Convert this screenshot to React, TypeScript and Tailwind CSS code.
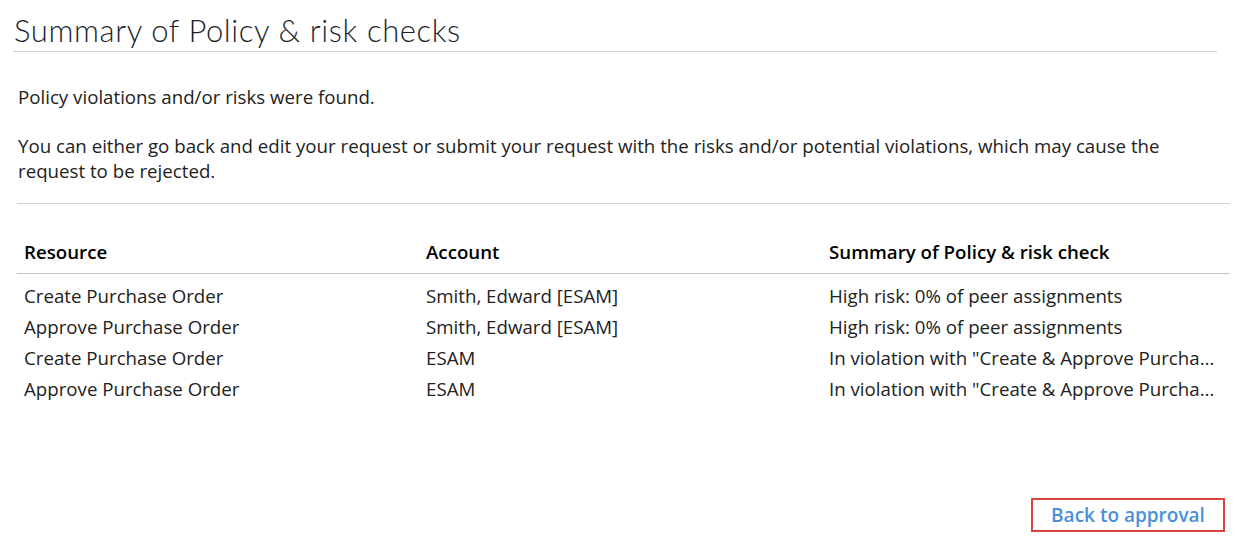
import React from "react";

const rows = [
  ["Create Purchase Order", "Smith, Edward [ESAM]", "High risk: 0% of peer assignments"],
  ["Approve Purchase Order", "Smith, Edward [ESAM]", "High risk: 0% of peer assignments"],
  ["Create Purchase Order", "ESAM", 'In violation with "Create & Approve Purchase Orders" policy'],
  ["Approve Purchase Order", "ESAM", 'In violation with "Create & Approve Purchase Orders" policy'],
];

export default function App() {
  return (
    <div className="w-[1243px] h-[540px] bg-white text-[#222] overflow-hidden" style={{ fontFamily: '"Open Sans", sans-serif' }}>
      <div className="pl-[13px] pr-[26px] pt-[11px]">
        <h1 className="text-[31px] leading-[38px] font-light tracking-[0.6px] text-[#1a1f2c] pl-px pb-[2px] border-b border-[#d4d4d4]" style={{ fontFamily: 'Lato, "Open Sans", sans-serif' }}>
          Summary of Policy &amp; risk checks
        </h1>
      </div>
      <div className="pl-[17px] pr-[13px]">
        <div className="pl-px pt-[32px] pb-[20px] text-[18.7px] leading-[25px] text-[#222] border-b border-[#d4d4d4]">
          <p>Policy violations and/or risks were found.</p>
          <p className="mt-[24px]">
            You can either go back and edit your request or submit your request with the risks and/or potential violations, which may cause the request to be rejected.
          </p>
        </div>
        <table className="w-full mt-[33px] table-fixed text-[18.7px] leading-[25px]">
          <colgroup>
            <col className="w-[402px]" />
            <col className="w-[403px]" />
            <col />
          </colgroup>
          <thead>
            <tr className="border-b border-[#c4c4c4]">
              <th className="text-left font-semibold px-[7px] pt-[2px] h-[36px] align-top text-black">Resource</th>
              <th className="text-left font-semibold px-[7px] pt-[2px] h-[36px] align-top text-black">Account</th>
              <th className="text-left font-semibold px-[7px] pt-[2px] h-[36px] align-top text-black">Summary of Policy &amp; risk check</th>
            </tr>
          </thead>
          <tbody>
            {rows.map((r, i) => (
              <tr key={i}>
                {r.map((c, j) => (
                  <td key={j} className={`px-[7px] truncate ${i === 0 ? "pt-[6px] h-[38px]" : "h-[31px]"}`}>{c}</td>
                ))}
              </tr>
            ))}
          </tbody>
        </table>
      </div>
      <div className="flex justify-end pr-[18px] mt-[94px]">
        <button className="w-[194px] h-[34px] border-[2px] border-[#e0403c] text-[#4a90d9] font-semibold text-[19px] leading-[28px]">
          Back to approval
        </button>
      </div>
    </div>
  );
}
